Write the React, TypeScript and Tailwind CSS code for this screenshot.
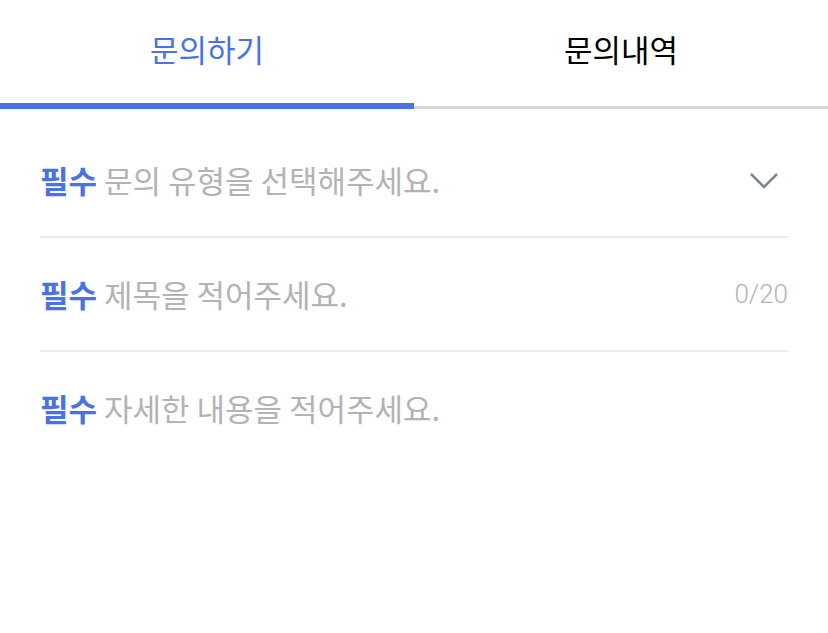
const font = { fontFamily: '"Noto Sans CJK KR", "Noto Sans", sans-serif' }

const Required = ({ text }: { text: string }) => (
  <p className="text-[31px] text-[#b3b3b3]">
    <span className="font-bold text-[#4a72e8]">필수</span> {text}
  </p>
)

const App = () => {
  return (
    <div className="min-h-screen w-[828px] bg-white" style={font}>
      <div className="flex">
        <div className="flex flex-1 flex-col">
          <div className="flex h-[103px] items-center justify-center pb-[5px] text-[31px] text-[#4a72e8]">
            문의하기
          </div>
          <div className="h-[6px] bg-[#4a72e8]" />
        </div>
        <div className="flex flex-1 flex-col">
          <div className="flex h-[103px] items-center justify-center pb-[5px] text-[31px] text-black">
            문의내역
          </div>
          <div className="mt-[3px] h-[3px] bg-[#d6d6d6]" />
        </div>
      </div>
      <div className="mt-[16px] flex flex-col px-[40px]">
        <div className="flex h-[113px] items-center justify-between border-b-2 border-[#ececec]">
          <Required text="문의 유형을 선택해주세요." />
          <svg width="30" height="18" viewBox="0 0 30 18" className="mr-[9px]">
            <polyline points="2,2 15,15 28,2" fill="none" stroke="#7b8594" strokeWidth="2.6" />
          </svg>
        </div>
        <div className="flex h-[114px] items-center justify-between border-b-2 border-[#ececec]">
          <Required text="제목을 적어주세요." />
          <span className="text-[26px] font-light text-[#b3b3b3]" style={{ fontFamily: 'Roboto, sans-serif' }}>
            0/20
          </span>
        </div>
        <div className="flex h-[112px] items-center">
          <Required text="자세한 내용을 적어주세요." />
        </div>
      </div>
    </div>
  )
}

export default App
